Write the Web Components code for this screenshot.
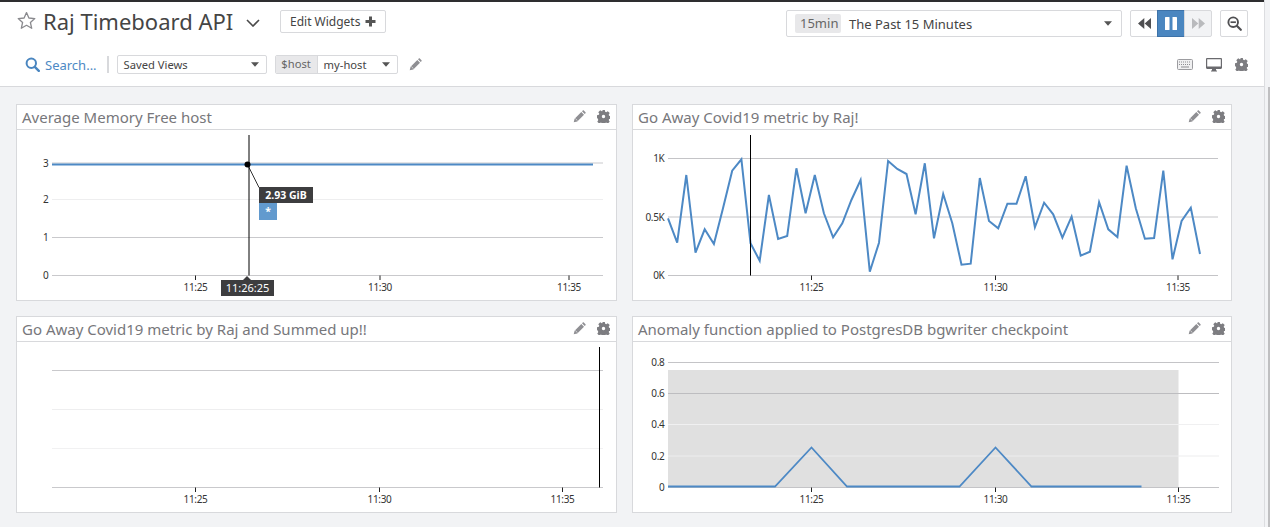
<!DOCTYPE html>
<html>
<head>
<meta charset="utf-8">
<title>Raj Timeboard API</title>
<style>
   html, body { margin: 0; height: 100%; overflow: hidden; }
   body {
      font-family: "Noto Sans", "Open Sans", sans-serif;
      background: #f2f3f5;
   }
   dash-page { height: 527px; }
</style>
</head>
<body>
<dash-page>
   <dash-header slot="header"></dash-header>
   <timeboard-grid slot="main">
      <chart-card title="Average Memory Free host" kind="memory"></chart-card>
      <chart-card title="Go Away Covid19 metric by Raj!" kind="covid"></chart-card>
      <chart-card title="Go Away Covid19 metric by Raj and Summed up!!" kind="summed"></chart-card>
      <chart-card title="Anomaly function applied to PostgresDB bgwriter checkpoint" kind="anomaly"></chart-card>
   </timeboard-grid>
</dash-page>

<script>
"use strict";
/* [ icons ]
=================================== */
const icons = {
   star: `<svg width="19" height="19" viewBox="0 0 19 19"><path d="M9.5 1.6l2.4 5.4 5.9.6-4.4 3.9 1.3 5.8-5.2-3-5.2 3 1.3-5.8L1.2 7.6l5.9-.6z" fill="none" stroke="#8a8a8e" stroke-width="1.3" stroke-linejoin="round"/></svg>`,
   chevron: `<svg width="14" height="8" viewBox="0 0 14 8"><path d="M1 1l6 6 6-6" fill="none" stroke="#4a4a4a" stroke-width="1.6"/></svg>`,
   plus: `<svg width="11" height="11" viewBox="0 0 11 11"><path d="M4 .5h3v3.5h3.500v3H7v3.500H4V7H.5V4H4z" fill="#555"/></svg>`,
   search: `<svg width="15" height="15" viewBox="0 0 15 15"><circle cx="6.300" cy="6.300" r="4.700" fill="none" stroke="#4a86c0" stroke-width="2"/><path d="M9.800 9.800l4 4" stroke="#4a86c0" stroke-width="2.400" stroke-linecap="round"/></svg>`,
   caret: `<svg width="8" height="5" viewBox="0 0 8 5"><path d="M0 .3h8L4 4.700z" fill="#555"/></svg>`,
   pencil: `<svg width="13" height="13" viewBox="0 0 13 13"><path d="M.7 12.300l.9-3.600 6.700-6.700 2.700 2.700-6.700 6.700zM9 1.300l.8-.8c.3-.3.700-.3 1 0l1.700 1.700c.3.3.3.7 0 1l-.8.800z" fill="#8f8f93"/><path d="M2.300 8.500l2.200 2.200" stroke="#fff" stroke-width=".6"/></svg>`,
   gear: `<svg width="13" height="13" viewBox="0 0 13 13"><path fill-rule="evenodd" fill="#7d7d81" d="M5.200 0h2.600l.4 1.800 1 .4L10.800 1.200l1.900 1.900-1 1.600.4 1 1.900.4v2.600l-1.900.4-.4 1 1 1.600-1.900 1.900-1.600-1-1 .4-.4 1.800H5.200l-.4-1.800-1-.4-1.600 1-1.900-1.900 1-1.600-.4-1L0 7.800V5.200l1.900-.4.4-1-1-1.600 1.900-1.900 1.600 1 1-.4zM6.500 4.800a1.700 1.700 0 1 0 0 3.400 1.700 1.700 0 0 0 0-3.400z"/></svg>`,
   rewind: `<svg width="13" height="11" viewBox="0 0 13 11"><path d="M6.300 0v11L0 5.500zM13 0v11L6.700 5.500z" fill="#4f4f52"/></svg>`,
   forward: `<svg width="13" height="11" viewBox="0 0 13 11"><path d="M0 0v11l6.300-5.500zM6.700 0v11L13 5.500z" fill="#b9babd"/></svg>`,
   pause: `<svg width="12" height="13" viewBox="0 0 12 13"><rect width="4.500" height="13" rx=".6" fill="#fff"/><rect x="7.500" width="4.500" height="13" rx=".6" fill="#fff"/></svg>`,
   zoomOut: `<svg width="15" height="15" viewBox="0 0 15 15"><circle cx="6.200" cy="6.200" r="4.800" fill="none" stroke="#4f4f52" stroke-width="1.900"/><path d="M3.500 6.200h5.400" stroke="#4f4f52" stroke-width="1.700"/><path d="M9.800 9.800l4 4" stroke="#4f4f52" stroke-width="2.200" stroke-linecap="round"/></svg>`,
   keyboard: `<svg width="16" height="11" viewBox="0 0 16 11"><rect x=".5" y=".5" width="15" height="10" rx="1" fill="#f0f0f1" stroke="#9c9ca0"/><path d="M2 3h12M2 5.500h12" stroke="#8d8d91" stroke-dasharray="1 1"/><path d="M4 8h8" stroke="#8d8d91"/></svg>`,
   monitor: `<svg width="16" height="14" viewBox="0 0 16 14"><path fill-rule="evenodd" fill="#6a6a6e" d="M1.200 0h13.600c.7 0 1.200.5 1.200 1.200v8.600c0 .7-.5 1.200-1.200 1.200H1.200C.5 11 0 10.500 0 9.800V1.200C0 .5.500 0 1.200 0zM1.200 1.200v7.400h13.600V1.200zM6 11h4v1.600H6zM5 12.600h6v1H5z"/></svg>`
};

/* [ chart data, in pixels of the card body ]
=================================== */
const covidY = [
   355,428,225,458,388,432,325,212,178,430,482,285,417,408,205,340,225,340,412,370,
   300,240,515,428,183,207,222,343,190,415,282,370,494,491,234,363,385,311,311,229,
   382,308,343,413,350,467,455,307,388,411,197,325,416,414,212,478,363,323,462
];

const charts = {
   memory: {
      x0: 35, x1: 586, ticks: [ [ 178.5, "11:25" ], [ 363, "11:30" ], [ 552, "11:35" ] ],
      axis: 145,
      grid: [ [ 32.5, "3", "#c9c9cc" ], [ 69, "2", "#eeeeef" ], [ 107, "1", "#c9c9cc" ], [ 145, "0", "#c9c9cc" ] ],
      cross: 232, crossTop: 5
   },
   covid: {
      x0: 35, x1: 585, ticks: [ [ 178.5, "11:25" ], [ 362.5, "11:30" ], [ 545, "11:35" ] ],
      axis: 145,
      grid: [ [ 28, "1K", "#c4c4c7" ], [ 86.5, "0.5K", "#c4c4c7" ], [ 145, "0K", "#c4c4c7" ] ],
      cross: 117.5, crossTop: 5
   },
   summed: {
      x0: 35, x1: 586, ticks: [ [ 178.5, "11:25" ], [ 362.5, "11:30" ], [ 545.5, "11:35" ] ],
      axis: 145,
      grid: [ [ 28, "", "#c9c9cc" ], [ 67, "", "#eeeeef" ], [ 106, "", "#f1f1f2" ], [ 145, "", "#c9c9cc" ] ],
      cross: 582.5, crossTop: 5
   },
   anomaly: {
      x0: 35, x1: 586, ticks: [ [ 178.5, "11:25" ], [ 362.5, "11:30" ], [ 545.5, "11:35" ] ],
      axis: 145,
      band: [ 35, 28, 510.5, 117 ],
      grid: [ [ 20, "0.8", "#c4c4c7" ], [ 51, "0.6", "#bdbdc0" ], [ 82, "0.4", "#f0f0f1" ], [ 113.5, "0.2", "#ededee" ], [ 145, "0", "#c4c4c7" ] ]
   }
};

/* -------------------------------- */
const svgLine = ( pts, w = 2 ) =>
   `<polyline points="${ pts.map( p => p.join( "," ) ).join( " " ) }" fill="none" stroke="#4d89c5" stroke-width="${ w }" stroke-linejoin="miter"/>`;

function chartSvg( kind ) {
   const c = charts[ kind ];
   let out = "";
   if( c.band ) {
      out += `<rect x="${ c.band[ 0 ] }" y="${ c.band[ 1 ] }" width="${ c.band[ 2 ] }" height="${ c.band[ 3 ] }" fill="#e0e0e0"/>`;
   }
   c.grid.forEach( ( [ y, label, color ] ) => {
      out += `<line x1="${ c.x0 }" x2="${ c.x1 }" y1="${ y + .5 }" y2="${ y + .5 }" stroke="${ color }"/>`;
      if( label ) out += `<text class="y" x="${ c.x0 - 3.5 }" y="${ y + 4 }">${ label }</text>`;
   } );
   c.ticks.forEach( ( [ x, label ] ) => {
      out += `<line x1="${ x }" x2="${ x }" y1="${ c.axis + .5 }" y2="${ c.axis + 5 }" stroke="#222"/>`;
      out += `<text class="x" x="${ x }" y="${ c.axis + 16 }">${ label }</text>`;
   } );
   if( kind === "memory" ) {
      out += svgLine( [ [ 35, 34.5 ], [ 576, 34.5 ] ] );
      out += `<line x1="230.5" y1="34.5" x2="242" y2="57.5" stroke="#333" stroke-width="1"/>`;
   }
   if( kind === "covid" ) {
      // read off the reference, 3x zoomed y
      const pts = covidY.map( ( y, i ) => [ +( 35 + i * 9.172 ).toFixed( 1 ), +( y / 3 - 30 ).toFixed( 1 ) ] );
      out += svgLine( pts );
   }
   if( kind === "anomaly" ) {
      out += svgLine( [
         [ 35, 144.5 ], [ 142, 144.5 ], [ 178.5, 105.5 ], [ 214, 144.5 ],
         [ 326.5, 144.5 ], [ 362.5, 105.5 ], [ 398.5, 144.5 ], [ 508.5, 144.5 ]
      ], 1.8 );
   }
   if( c.cross !== undefined ) {
      out += `<line x1="${ c.cross }" x2="${ c.cross }" y1="${ c.crossTop }" y2="${ c.axis + .5 }" stroke="#000"/>`;
   }
   if( kind === "memory" ) {
      out += `<circle cx="230.5" cy="34.5" r="3" fill="#000"/>`;
   }
   return `<svg width="599" height="170" viewBox="0 0 599 170">
      <style>
         text { font: 10px "Noto Sans", "Open Sans", sans-serif; fill: #333; letter-spacing: -.3px; }
         .y { text-anchor: end; }
         .x { text-anchor: middle; }
      </style>${ out }</svg>`;
}

/* == [ page shell ] == == == == == == == == == */
class DashPage extends HTMLElement {
   constructor() {
      super();
      this.attachShadow( { mode: "open" } ).innerHTML = `
         <style>
            :host {
               display: flex;
               width: 1270px;
               background: #f2f3f5;
            }
            .wrap { display: flex; flex-direction: column; width: 1264px; flex: none; }
            .edge {
               flex: 1;
               box-sizing: border-box;
               border-left: 1px solid #dcdde0;
               display: flex;
               justify-content: flex-end;
            }
            .edge i { display: block; width: 2px; margin-top: 87px; background: #bfbfc1; }
         </style>
         <div class="wrap">
            <slot name="header"></slot>
            <slot name="main"></slot>
         </div>
         <div class="edge"><i></i></div>`;
   }
}
customElements.define( "dash-page", DashPage );

/* == [ top header ] == == == == == == == == == */
class DashHeader extends HTMLElement {
   constructor() {
      super();
      this.attachShadow( { mode: "open" } ).innerHTML = `
         <style>
            :host {
               display: block;
               background: #fff;
               border-top: 2px solid #2e2e30;
               border-bottom: 1px solid #d8d9dc;
               height: 84px;
               color: #4a4a4a;
               font-size: 13px;
            }
            .row {
               display: flex;
               align-items: center;
            }
            .top { height: 27px; margin-top: 8px; padding-left: 17px; }
            .top > svg:first-child { margin-top: -6px; }
            .bottom { height: 19px; margin-top: 18px; padding-left: 25px; }
            .spacer { flex: 1; }
            h1 {
               margin: -4px 0 0 7px;
               font-size: 22px;
               font-weight: 400;
               color: #454545;
               line-height: 27px;
               white-space: nowrap;
            }
            .chev { margin: -2px 0 0 13px; display: flex; }
            .btn {
               display: flex;
               align-items: center;
               justify-content: center;
               box-sizing: border-box;
               background: #fff;
               border: 1px solid #d8d9dc;
               border-radius: 2px;
            }
            .edit {
               margin: -4px 0 0 20px;
               width: 106px;
               height: 23px;
               gap: 5px;
               font-size: 12px;
               color: #444;
            }
            .range {
               width: 336px;
               height: 27px;
               padding: 0 8px;
               justify-content: flex-start;
               color: #444;
            }
            .tag {
               background: #e8e8ea;
               border-radius: 2px;
               color: #666;
               padding: 0 5px;
               line-height: 19px;
               height: 19px;
            }
            .range .tag { width: 36px; text-align: center; }
            .range span.label { margin-left: 8px; }
            .range svg { margin-left: auto; margin-right: 1px; }
            .player { margin-left: 8px; display: flex; height: 27px; }
            .player .btn { width: 28px; height: 27px; border-radius: 0; margin-left: -1px; }
            .player .btn:first-child { border-radius: 2px 0 0 2px; margin-left: 0; }
            .player .btn:last-child { border-radius: 0 2px 2px 0; background: #f2f3f5; }
            .player .on { background: #4a86c0; border-color: #3d72a8; }
            .zoom { width: 28px; height: 27px; margin: 0 16px 0 8px; }
            .search { color: #4d89c5; margin-left: 5px; font-size: 13px; }
            .sep { width: 2px; height: 17px; background: #d8d9dc; margin: 0 8px 0 10px; }
            .select {
               height: 19px;
               font-size: 11.2px;
               color: #444;
               justify-content: space-between;
               padding: 0 7px 0 6px;
            }
            .views { width: 150px; }
            .host { margin-left: 8px; width: 123px; padding: 0 7px 0 0; overflow: hidden; }
            .host .tag {
               border-radius: 0;
               width: 42px;
               height: 19px;
               box-sizing: border-box;
               border-right: 1px solid #d8d9dc;
               line-height: 18px;
               text-align: center;
               padding: 0;
            }
            .host .val { flex: 1; margin-left: 6px; }
            .edit-vars { margin-left: 11px; display: flex; }
            .right-icons { display: flex; align-items: center; gap: 13px; margin-right: 16px; }
         </style>
         <div class="row top">
            ${ icons.star }
            <h1>Raj Timeboard API</h1>
            <span class="chev">${ icons.chevron }</span>
            <div class="btn edit"><span>Edit Widgets</span>${ icons.plus }</div>
            <span class="spacer"></span>
            <div class="btn range">
               <span class="tag">15min</span>
               <span class="label">The Past 15 Minutes</span>
               ${ icons.caret }
            </div>
            <div class="player">
               <div class="btn">${ icons.rewind }</div>
               <div class="btn on">${ icons.pause }</div>
               <div class="btn">${ icons.forward }</div>
            </div>
            <div class="btn zoom">${ icons.zoomOut }</div>
         </div>
         <div class="row bottom">
            ${ icons.search }
            <span class="search">Search...</span>
            <span class="sep"></span>
            <div class="btn select views"><span>Saved Views</span>${ icons.caret }</div>
            <div class="btn select host">
               <span class="tag">$host</span>
               <span class="val">my-host</span>
               ${ icons.caret }
            </div>
            <span class="edit-vars">${ icons.pencil }</span>
            <span class="spacer"></span>
            <div class="right-icons">
               ${ icons.keyboard }${ icons.monitor }${ icons.gear }
            </div>
         </div>`;
   }
}
customElements.define( "dash-header", DashHeader );

/* == [ grid of widgets ] == == == == == == == == == */
class TimeboardGrid extends HTMLElement {
   constructor() {
      super();
      this.attachShadow( { mode: "open" } ).innerHTML = `
         <style>
            :host {
               display: grid;
               grid-template-columns: 601px 600px;
               grid-auto-rows: 197px;
               column-gap: 15px;
               row-gap: 15px;
               padding: 17px 0 0 16px;
            }
         </style>
         <slot></slot>`;
   }
}
customElements.define( "timeboard-grid", TimeboardGrid );

/* == [ chart widget ] == == == == == == == == == */
class ChartCard extends HTMLElement {
   constructor() {
      super();
      this.attachShadow( { mode: "open" } );
   }
   connectedCallback() {
      const kind = this.getAttribute( "kind" );
      this.shadowRoot.innerHTML = `
         <style>
            :host {
               display: flex;
               flex-direction: column;
               box-sizing: border-box;
               background: #fff;
               border: 1px solid #d8d9dc;
               overflow: hidden;
               position: relative;
            }
            header {
               display: flex;
               align-items: center;
               flex: none;
               height: 24px;
               padding: 0 6px 0 5px;
               border-bottom: 1px solid #d8d9dc;
            }
            h2 {
               margin: 0;
               flex: 1;
               font-size: 15px;
               font-weight: 400;
               color: #77777b;
               white-space: nowrap;
            }
            .tools { display: flex; gap: 11px; align-items: center; margin-top: -2px; }
            .body { flex: 1; min-height: 0; }
            svg { display: block; }
            .tip {
               position: absolute;
               background: #3d3d3f;
               color: #fff;
               font-size: 10.5px;
               line-height: 16px;
               text-align: center;
            }
            .value { left: 242px; top: 82px; width: 54px; height: 16px; font-weight: 700; }
            .series { left: 242px; top: 98px; width: 18px; height: 17px; background: #629ace; font-weight: 700; }
            .time { left: 204px; top: 175px; width: 53px; height: 16px; font-size: 11px; }
            .time::before {
               content: "";
               position: absolute;
               left: 22px;
               top: -4px;
               border: 4px solid transparent;
               border-top: 0;
               border-bottom-color: #3d3d3f;
            }
         </style>
         <header>
            <h2>${ this.getAttribute( "title" ) }</h2>
            <span class="tools">${ icons.pencil }${ icons.gear }</span>
         </header>
         <div class="body">${ chartSvg( kind ) }</div>
         ${ kind === "memory" ? `
            <div class="tip value">2.93 GiB</div>
            <div class="tip series">*</div>
            <div class="tip time">11:26:25</div>` : "" }`;
   }
}
customElements.define( "chart-card", ChartCard );
</script>
</body>
</html>
